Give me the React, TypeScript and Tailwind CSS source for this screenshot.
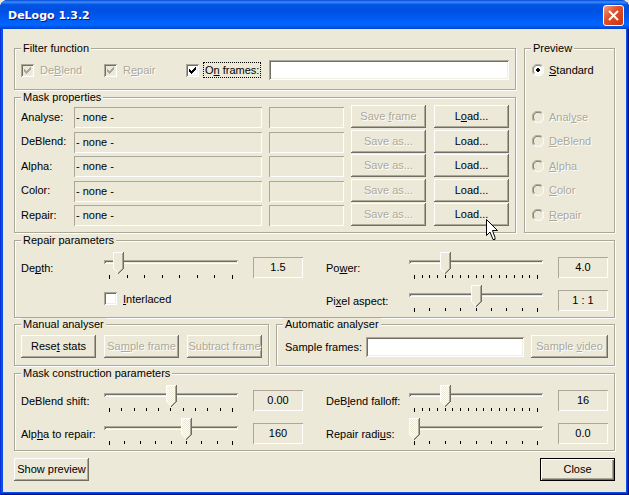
import React, { useState } from 'react';
import clsx from 'clsx';

const FACE = 'bg-[#ece9d8]';
const SUNKEN = 'shadow-[inset_1px_1px_0_#aca899,inset_-1px_-1px_0_#fff,inset_2px_2px_0_#716f64,inset_-2px_-2px_0_#f1efe2]';
const DISABLED_TEXT = 'text-[#aca899] [text-shadow:1px_1px_0_#fff]';

// "&" marks the letter with the keyboard shortcut
const Mnemonic = ({ text }: { text: string }) => {
  const at = text.indexOf('&');
  if (at < 0) return <>{text}</>;
  return (
    <>
      {text.slice(0, at)}
      <u className="underline underline-offset-1 [text-decoration-skip-ink:none]">{text[at + 1]}</u>
      {text.slice(at + 2)}
    </>
  );
};

interface GroupProps {
  title: string;
  className?: string;
  children: React.ReactNode;
}

const Group = ({ title, className, children }: GroupProps) => (
  <fieldset
    className={clsx(
      'min-w-0 border border-[#aca899] px-1.5 shadow-[1px_1px_0_#fff,inset_1px_1px_0_#fff]',
      className
    )}
  >
    <legend className={clsx('h-[13px] px-0.5 leading-[13px]', FACE)}>{title}</legend>
    {children}
  </fieldset>
);

interface PushButtonProps {
  text: string;
  disabled?: boolean;
  primary?: boolean;
  wide?: boolean;
}

const PushButton = ({ text, disabled, primary, wide }: PushButtonProps) => (
  <button
    type="button"
    disabled={disabled}
    className={clsx(
      'h-[23px] shrink-0 whitespace-nowrap text-center leading-[21px]',
      FACE,
      wide ? 'w-[77px]' : 'w-[75px]',
      primary
        ? 'border border-black shadow-[inset_1px_1px_0_#fff,inset_-1px_-1px_0_#716f64,inset_-2px_-2px_0_#aca899]'
        : 'shadow-[inset_-1px_-1px_0_#716f64,inset_1px_1px_0_#fff,inset_-2px_-2px_0_#aca899]',
      disabled && DISABLED_TEXT
    )}
  >
    <Mnemonic text={text} />
  </button>
);

const ValueBox = ({ className, children }: { className?: string; children?: React.ReactNode }) => (
  <output
    className={clsx(
      'block h-[21px] leading-[21px] shadow-[inset_1px_1px_0_#aca899,inset_-1px_-1px_0_#fff]',
      className
    )}
  >
    {children}
  </output>
);

interface CheckProps {
  text: string;
  defaultChecked?: boolean;
  disabled?: boolean;
  focused?: boolean;
}

const CheckBox = ({ text, defaultChecked = false, disabled, focused }: CheckProps) => {
  const [checked, setChecked] = useState(defaultChecked);
  return (
    <label className={clsx('flex items-center gap-1', disabled && DISABLED_TEXT)}>
      <span className="grid size-[13px] shrink-0">
        <input
          type="checkbox"
          checked={checked}
          disabled={disabled}
          onChange={(e) => setChecked(e.target.checked)}
          className={clsx(
            'col-start-1 row-start-1 size-[13px] appearance-none outline-none',
            disabled ? FACE : 'bg-white',
            SUNKEN
          )}
        />
        {checked && (
          <svg viewBox="0 0 13 13" aria-hidden="true" className="pointer-events-none col-start-1 row-start-1 size-[13px]">
            <path
              d="M3 5h1v1h1v1h1v-1h1v-1h1v-1h1v-1h1v3h-1v1h-1v1h-1v1h-1v1h-1v-1h-1v-1h-1z"
              fill={disabled ? '#aca899' : '#000'}
            />
          </svg>
        )}
      </span>
      <span className={clsx('border px-px leading-[14px] whitespace-nowrap', focused ? 'border-dotted border-black' : 'border-transparent')}>
        <Mnemonic text={text} />
      </span>
    </label>
  );
};

interface RadioProps {
  text: string;
  checked?: boolean;
  disabled?: boolean;
}

const Radio = ({ text, checked, disabled }: RadioProps) => (
  <label className={clsx('flex h-[23px] items-center gap-[5px]', disabled && DISABLED_TEXT)}>
    <span className="grid size-3 shrink-0">
      <input
        type="radio"
        name="preview"
        defaultChecked={checked}
        disabled={disabled}
        className={clsx('col-start-1 row-start-1 size-3 appearance-none rounded-full', disabled ? FACE : 'bg-white')}
      />
      <svg viewBox="0 0 12 12" fill="none" aria-hidden="true" className="pointer-events-none col-start-1 row-start-1 size-3">
        <path d="M1.8 10.2A5.5 5.5 0 0 1 10.2 1.8" stroke="#aca899" />
        <path d="M2.6 9.4A4.5 4.5 0 0 1 9.4 2.6" stroke="#716f64" />
        <path d="M10.2 1.8A5.5 5.5 0 0 1 1.8 10.2" stroke="#fff" />
        <path d="M9.4 2.6A4.5 4.5 0 0 1 2.6 9.4" stroke="#f1efe2" />
        {checked && <path d="M5 4h2v1h1v2h-1v1h-2v-1h-1v-2h1z" fill="#000" />}
      </svg>
    </span>
    <span><Mnemonic text={text} /></span>
  </label>
);

interface SliderProps {
  id: string;
  text: string;
  value: string;
  max: number;
  start: number;
  ticks: number;
  disabled?: boolean;
}

const SliderRow = ({ id, text, value, max, start, ticks, disabled }: SliderProps) => {
  const [position, setPosition] = useState(start);
  return (
    <div className="flex h-[27px] items-center">
      <label htmlFor={id} className="mt-1 w-[83px] shrink-0 whitespace-nowrap">
        <Mnemonic text={text} />
      </label>
      <div className="relative h-[27px] flex-1">
        <input
          id={id}
          type="range"
          min={0}
          max={max}
          value={position}
          disabled={disabled}
          onChange={(e) => setPosition(Number(e.target.value))}
          className="block h-5 w-full appearance-none bg-transparent [&::-webkit-slider-runnable-track]:h-1 [&::-webkit-slider-runnable-track]:shadow-[inset_1px_1px_0_#aca899,inset_-1px_-1px_0_#fff,inset_2px_2px_0_#716f64] [&::-webkit-slider-thumb]:h-1 [&::-webkit-slider-thumb]:w-[11px] [&::-webkit-slider-thumb]:appearance-none [&::-webkit-slider-thumb]:bg-transparent"
        />
        <div className="pointer-events-none absolute inset-x-[5px] top-0 h-[22px]">
          <svg
            viewBox="0 0 11 22"
            shapeRendering="crispEdges"
            aria-hidden="true"
            className="absolute top-0 h-[22px] w-[11px] -translate-x-[5px]"
            style={{ left: `${Math.round((position / max) * 123)}px` }}
          >
            <defs>
              <pattern id={`${id}-dither`} width="2" height="2" patternUnits="userSpaceOnUse">
                <rect width="2" height="2" fill="#ece9d8" />
                <rect width="1" height="1" fill="#fff" />
                <rect x="1" y="1" width="1" height="1" fill="#fff" />
              </pattern>
            </defs>
            <path d="M0 0h11v17L6 22H5L0 17z" fill={disabled ? `url(#${id}-dither)` : '#ece9d8'} />
            <path d="M0 0h10v1H1v16h1v1h1v1h1v1h1v1H4v-1H3v-1H2v-1H1v-1H0z" fill="#fff" />
            <path d="M9 1h1v16H9v1H8v1H7v1H6v1H5v-1h1v-1h1v-1h1v-1h1z" fill="#aca899" />
            <path d="M10 0h1v17h-1v1H9v1H8v1H7v1H6v1H5v-1h1v-1h1v-1h1v-1h1v-1h1z" fill="#716f64" />
          </svg>
        </div>
        <div className="flex justify-between px-[5px] pt-[3px]" aria-hidden="true">
          {Array.from({ length: ticks }, (_, i) => (
            <i key={i} className={clsx('block w-px bg-black', i === 0 || i === ticks - 1 ? 'h-1' : 'h-[3px]')} />
          ))}
        </div>
      </div>
      <ValueBox className="mt-1 ml-[15px] w-[50px] shrink-0 text-center">{value}</ValueBox>
    </div>
  );
};

const MASKS = [
  { text: 'Analyse:', save: 'Save &frame', load: 'L&oad...' },
  { text: 'DeBlend:', save: 'Save as...', load: 'Load...' },
  { text: 'Alpha:', save: 'Save as...', load: 'Load...' },
  { text: 'Color:', save: 'Save as...', load: 'Load...' },
  { text: 'Repair:', save: 'Save as...', load: 'Load...' }
];

const PREVIEWS = ['Anal&yse', '&DeBlend', '&Alpha', '&Color', '&Repair'];

const TextBox = ({ id, label }: { id: string; label?: string }) => (
  <input id={id} type="text" aria-label={label} className={clsx('h-5 min-w-0 flex-1 bg-white px-1 outline-none', SUNKEN)} />
);

function App() {
  return (
    <div className="bg-[#ece9d8]">
      <div
        className={clsx(
          'relative overflow-hidden rounded-t-lg bg-[#0a50e8] text-[11px] leading-4 text-black',
          'shadow-[inset_1px_0_0_#0831d9,inset_-1px_-1px_0_#00138c,inset_-2px_-2px_0_#0030c8]',
          "font-['Liberation_Sans',sans-serif]"
        )}
      >
        <header className="flex h-[29px] items-center justify-between bg-[linear-gradient(#0048d8_0%,#3f8cf8_7%,#0055e5_16%,#0050e0_35%,#005cf5_65%,#0066ff_85%,#0058e8_93%,#003dd0_100%)] pt-0.5 pr-[5px] pl-2">
          <h1 className="font-['DejaVu_Sans',sans-serif] text-[11px] font-bold text-white [text-shadow:1px_1px_0_#0a1883]">DeLogo 1.3.2</h1>
          <button
            type="button"
            aria-label="Close window"
            className="flex size-[21px] items-center justify-center rounded-[3px] border border-white bg-[linear-gradient(135deg,#f0a08a,#e0522c_40%,#c8330c)]"
          >
            <svg viewBox="0 0 11 11" className="size-[11px]" aria-hidden="true">
              <path d="M1 1l9 9M10 1l-9 9" stroke="#fff" strokeWidth="2" />
            </svg>
          </button>
        </header>

        <main className={clsx('mx-[3px] mb-[3px] flex flex-col px-[11px] pt-[13px] pb-[11px]', FACE)}>
          <div className="mb-px flex gap-2">
            <div className="flex min-w-0 flex-1 flex-col gap-px">
              <Group title="Filter function" className="pt-[5px] pb-[9px]">
                <div className="flex h-5 items-center">
                  <div className="w-[83px]"><CheckBox text="De&Blend" defaultChecked disabled /></div>
                  <div className="w-[82px]"><CheckBox text="R&epair" defaultChecked disabled /></div>
                  <div className="w-[83px]"><CheckBox text="O&n frames:" defaultChecked focused /></div>
                  <TextBox id="frames" label="Frames" />
                </div>
              </Group>

              <Group title="Mask properties" className="pt-px pb-1.5">
                <div className="flex h-[121px] flex-col justify-between">
                  {MASKS.map((mask) => (
                    <div key={mask.text} className="flex items-end">
                      <span className="w-[53px] shrink-0 self-center">{mask.text}</span>
                      <ValueBox className="min-w-0 flex-1 px-0.5">- none -</ValueBox>
                      <ValueBox className="mx-[7px] w-[75px] shrink-0" />
                      <PushButton text={mask.save} disabled />
                      <span className="w-2 shrink-0" />
                      <PushButton text={mask.load} />
                    </div>
                  ))}
                </div>
              </Group>
            </div>

            <Group title="Preview" className="w-[91px] shrink-0">
              <div className="flex flex-col pt-[3px] pb-1.5 pl-px">
                <Radio text="&Standard" checked />
                <div className="mt-6 flex h-[121px] flex-col justify-between">
                  {PREVIEWS.map((text) => (
                    <Radio key={text} text={text} disabled />
                  ))}
                </div>
              </div>
            </Group>
          </div>

          <Group title="Repair parameters" className="pt-[5px] pb-[5px]">
            <div className="grid grid-cols-2 gap-x-[23px] gap-y-1.5">
              <SliderRow id="depth" text="De&pth:" value="1.5" max={14} start={1} ticks={8} />
              <SliderRow id="power" text="Po&wer:" value="4.0" max={16} start={4} ticks={17} />
              <div className="flex items-center pl-[83px]">
                <CheckBox text="&Interlaced" />
              </div>
              <SliderRow id="aspect" text="Pi&xel aspect:" value="1 : 1" max={8} start={4} ticks={9} />
            </div>
          </Group>

          <div className="mb-px flex gap-[7px]">
            <Group title="Manual analyser" className="w-[255px] shrink-0 pt-1 pb-[7px]">
              <div className="flex gap-2">
                <PushButton text="Rese&t stats" />
                <PushButton text="Sa&mple frame" disabled />
                <PushButton text="Subtract frame" disabled />
              </div>
            </Group>
            <Group title="Automatic analyser" className="flex-1 pt-1 pb-[7px]">
              <div className="flex items-center">
                <label htmlFor="samples" className="w-[83px] shrink-0 pl-0.5 whitespace-nowrap">Sample frames:</label>
                <TextBox id="samples" />
                <span className="w-[7px] shrink-0" />
                <PushButton text="Sample &video" disabled wide />
              </div>
            </Group>
          </div>

          <Group title="Mask construction parameters" className="pt-[5px] pb-[5px]">
            <div className="grid grid-cols-2 gap-x-[23px] gap-y-1.5">
              <SliderRow id="shift" text="DeBlend shift:" value="0.00" max={10} start={5} ticks={11} disabled />
              <SliderRow id="falloff" text="DeB&lend falloff:" value="16" max={16} start={4} ticks={17} disabled />
              <SliderRow id="alpha" text="Alp&ha to repair:" value="160" max={8} start={5} ticks={9} disabled />
              <SliderRow id="radius" text="Repair radi&us:" value="0.0" max={8} start={0} ticks={9} disabled />
            </div>
          </Group>

          <div className="mt-[7px] flex justify-between">
            <PushButton text="Show preview" />
            <PushButton text="Close" primary />
          </div>
        </main>

        {/* mouse pointer */}
        <svg viewBox="0 0 12 21" aria-hidden="true" className="pointer-events-none absolute top-[219px] left-[486px] h-[21px] w-3">
          <path d="M.5.5v16L4 13l3 7.5h2v-2L6.5 11.5h5z" fill="#fff" stroke="#000" />
        </svg>
      </div>
    </div>
  );
}

export default App;
